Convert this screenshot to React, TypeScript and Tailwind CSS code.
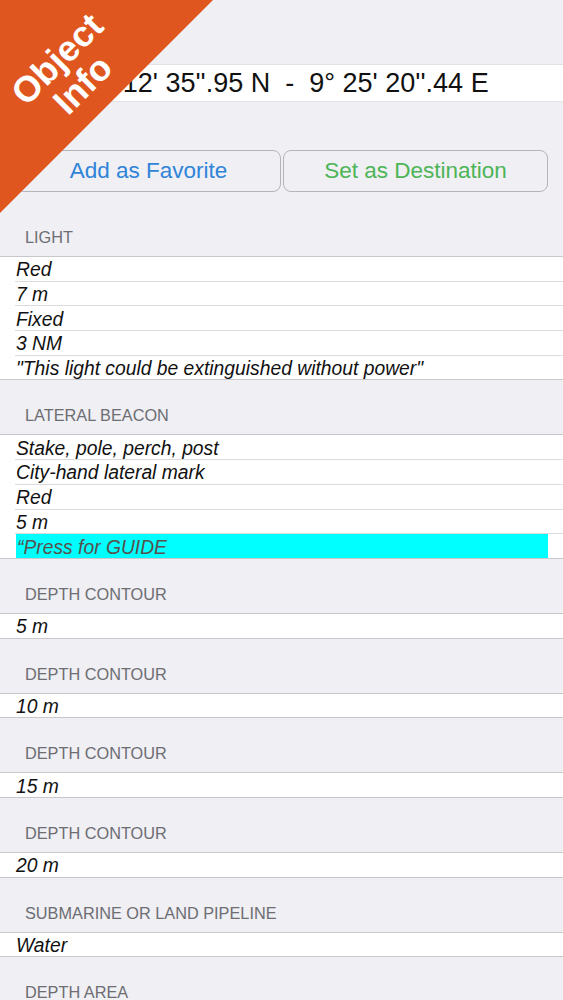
import React from "react";

type Section = { title: string; rows: { text: string; highlight?: boolean }[] };

const sections: Section[] = [
  {
    title: "LIGHT",
    rows: [
      { text: "Red" },
      { text: "7 m" },
      { text: "Fixed" },
      { text: "3 NM" },
      { text: "\"This light could be extinguished without power\"" },
    ],
  },
  {
    title: "LATERAL BEACON",
    rows: [
      { text: "Stake, pole, perch, post" },
      { text: "City-hand lateral mark" },
      { text: "Red" },
      { text: "5 m" },
      { text: "\u201CPress for GUIDE", highlight: true },
    ],
  },
  { title: "DEPTH CONTOUR", rows: [{ text: "5 m" }] },
  { title: "DEPTH CONTOUR", rows: [{ text: "10 m" }] },
  { title: "DEPTH CONTOUR", rows: [{ text: "15 m" }] },
  { title: "DEPTH CONTOUR", rows: [{ text: "20 m" }] },
  { title: "SUBMARINE OR LAND PIPELINE", rows: [{ text: "Water" }] },
  { title: "DEPTH AREA", rows: [{ text: "0 m - 5 m" }] },
];

function SectionBlock({ s }: { s: Section }) {
  return (
    <div>
      <div className="h-[54px] flex items-end pb-[10px] pl-[25px] text-[16.3px] leading-[18px] text-[#6d6d72]">
        {s.title}
      </div>
      <div className="bg-white border-t border-[#c8c7cc]">
        {s.rows.map((r, i) => {
          const last = i === s.rows.length - 1;
          return (
            <div
              key={i}
              className={
                last
                  ? "h-[24.7px] border-b border-[#c8c7cc] pl-[16px] pr-[15px]"
                  : "h-[24.7px] pl-[15px]"
              }
            >
              <div
                className={
                  last
                    ? "h-full flex items-center"
                    : "h-full flex items-center border-b border-[#dcdce0] pl-[1px]"
                }
              >
                {r.highlight ? (
                  <div className="w-full h-full bg-[#00ffff] flex items-center pl-[1px] pt-[3px] italic text-[19.3px] leading-[20px] text-[#58504c] whitespace-nowrap">
                    {r.text}
                  </div>
                ) : (
                  <span className="italic text-[19.3px] leading-[20px] pt-[3px] text-[#111111] whitespace-nowrap">
                    {r.text}
                  </span>
                )}
              </div>
            </div>
          );
        })}
      </div>
    </div>
  );
}

export default function App() {
  return (
    <div
      className="relative w-full h-[1000px] overflow-hidden bg-[#efeff4]"
      style={{ fontFamily: '"Liberation Sans", Arial, sans-serif' }}
    >
      <div className="h-[64px]" />
      <div className="h-[38px] bg-white border-y border-[#e2e2e6] flex items-center justify-center text-[27px] text-[#111111] whitespace-pre">
        {"53\u00B0 12' 35''.95 N  -  9\u00B0 25' 20''.44 E"}
      </div>
      <div className="h-[48px]" />
      <div className="h-[42px] flex gap-[2px] px-[16px] pr-[15px]">
        <button className="flex-1 rounded-[8px] border border-[#b4b4b9] bg-[#efeff4] text-[22.5px] text-[#2f84d8] flex items-center justify-center">
          Add as Favorite
        </button>
        <button className="flex-1 rounded-[8px] border border-[#b4b4b9] bg-[#efeff4] text-[22.5px] text-[#4cb556] flex items-center justify-center">
          Set as Destination
        </button>
      </div>
      <div className="h-[10px]" />
      {sections.map((s, i) => (
        <SectionBlock key={i} s={s} />
      ))}

      {/* Corner ribbon */}
      <svg
        className="absolute left-0 top-0"
        width="214"
        height="214"
        viewBox="0 0 214 214"
      >
        <polygon points="0,0 213,0 0,213" fill="#e0561f" />
      </svg>
      <div className="absolute left-[70px] top-[72px] w-0 h-0 flex items-center justify-center">
        <div className="-rotate-45 flex flex-col items-center text-white font-bold text-[36px] leading-[36px] whitespace-nowrap">
          <span>Object</span>
          <span>Info</span>
        </div>
      </div>
    </div>
  );
}
